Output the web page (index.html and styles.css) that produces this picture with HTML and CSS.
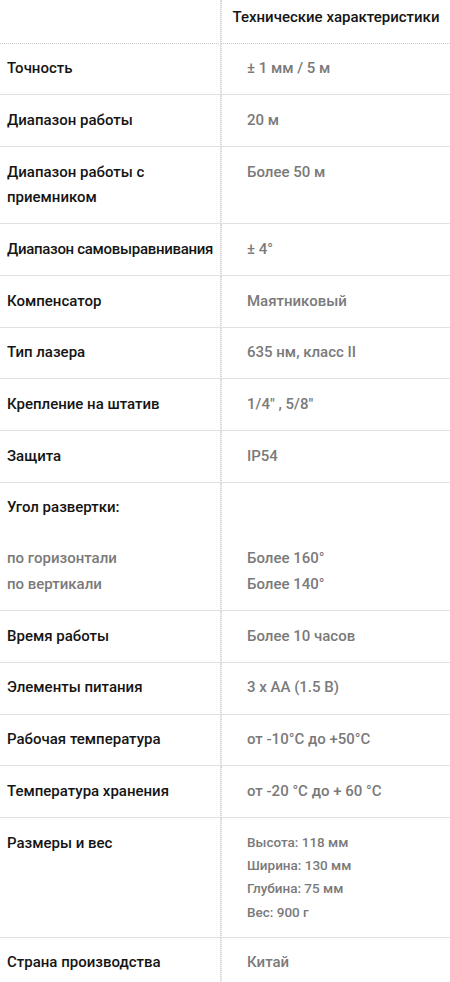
FILE: index.html
```html
<!DOCTYPE html>
<html lang="ru">
<head>
<meta charset="utf-8">
<title>Технические характеристики</title>
<link rel="stylesheet" href="styles.css">
</head>
<body>
<table class="specs">
  <thead>
    <tr>
      <th class="label"></th>
      <th class="value head">Технические характеристики</th>
    </tr>
  </thead>
  <tbody>
    <tr><td class="label">Точность</td><td class="value">± 1 мм / 5 м</td></tr>
    <tr><td class="label">Диапазон работы</td><td class="value">20 м</td></tr>
    <tr><td class="label">Диапазон работы с приемником</td><td class="value">Более 50 м</td></tr>
    <tr><td class="label nowrap">Диапазон самовыравнивания</td><td class="value">± 4°</td></tr>
    <tr><td class="label">Компенсатор</td><td class="value">Маятниковый</td></tr>
    <tr><td class="label">Тип лазера</td><td class="value">635 нм, класс II</td></tr>
    <tr><td class="label">Крепление на штатив</td><td class="value">1/4" , 5/8"</td></tr>
    <tr><td class="label">Защита</td><td class="value">IP54</td></tr>
    <tr>
      <td class="label">Угол развертки:<br><br><span class="sub">по горизонтали</span><br><span class="sub">по вертикали</span></td>
      <td class="value"><br><br>Более 160°<br>Более 140°</td>
    </tr>
    <tr><td class="label">Время работы</td><td class="value">Более 10 часов</td></tr>
    <tr><td class="label">Элементы питания</td><td class="value">3 х АА (1.5 В)</td></tr>
    <tr><td class="label">Рабочая температура</td><td class="value">от -10°C до +50°C</td></tr>
    <tr><td class="label">Температура хранения</td><td class="value">от -20 °C до + 60 °C</td></tr>
    <tr>
      <td class="label">Размеры и вес</td>
      <td class="value small">
        <p>Высота: 118 мм</p>
        <p>Ширина: 130 мм</p>
        <p>Глубина: 75 мм</p>
        <p>Вес: 900 г</p>
      </td>
    </tr>
    <tr><td class="label">Страна производства</td><td class="value">Китай</td></tr>
  </tbody>
</table>
</body>
</html>
```

FILE: styles.css
```css
html, body {
  margin: 0;
  padding: 0;
  background: #ffffff;
}

body {
  font-family: Roboto, "Noto Sans", "DejaVu Sans", sans-serif;
  font-size: 15px;
  font-weight: 500;
  color: #1a1a1a;
}

.specs {
  width: 450px;
  border-collapse: separate;
  border-spacing: 0;
  table-layout: fixed;
}

.specs th,
.specs td {
  vertical-align: top;
  line-height: 25.6px;
  padding: 12.55px 0 12.55px;
  border-bottom: 1px solid #e1e1e1;
  text-align: left;
  font-weight: 500;
}

.specs th {
  padding-top: 4.5px;
  border-bottom: 1px dotted #c9c9c9;
}

.specs .label {
  width: 213px;
  padding-left: 7px;
  padding-right: 0;
  border-right: 1px solid #e2e2e2;
  color: #151515;
}

.specs .nowrap {
  white-space: nowrap;
  letter-spacing: -0.3px;
}

.specs .value {
  padding-left: 25px;
  padding-right: 8px;
  border-left: 1px dotted #d4d4d4;
  color: #7a7a7a;
}

.specs .head {
  padding-left: 0;
  padding-right: 0;
  text-align: center;
  color: #151515;
}

.sub {
  color: #7a7a7a;
}

.small {
  font-size: 13.5px;
}

.small p {
  margin: 0;
  line-height: 23.4px;
}
```
